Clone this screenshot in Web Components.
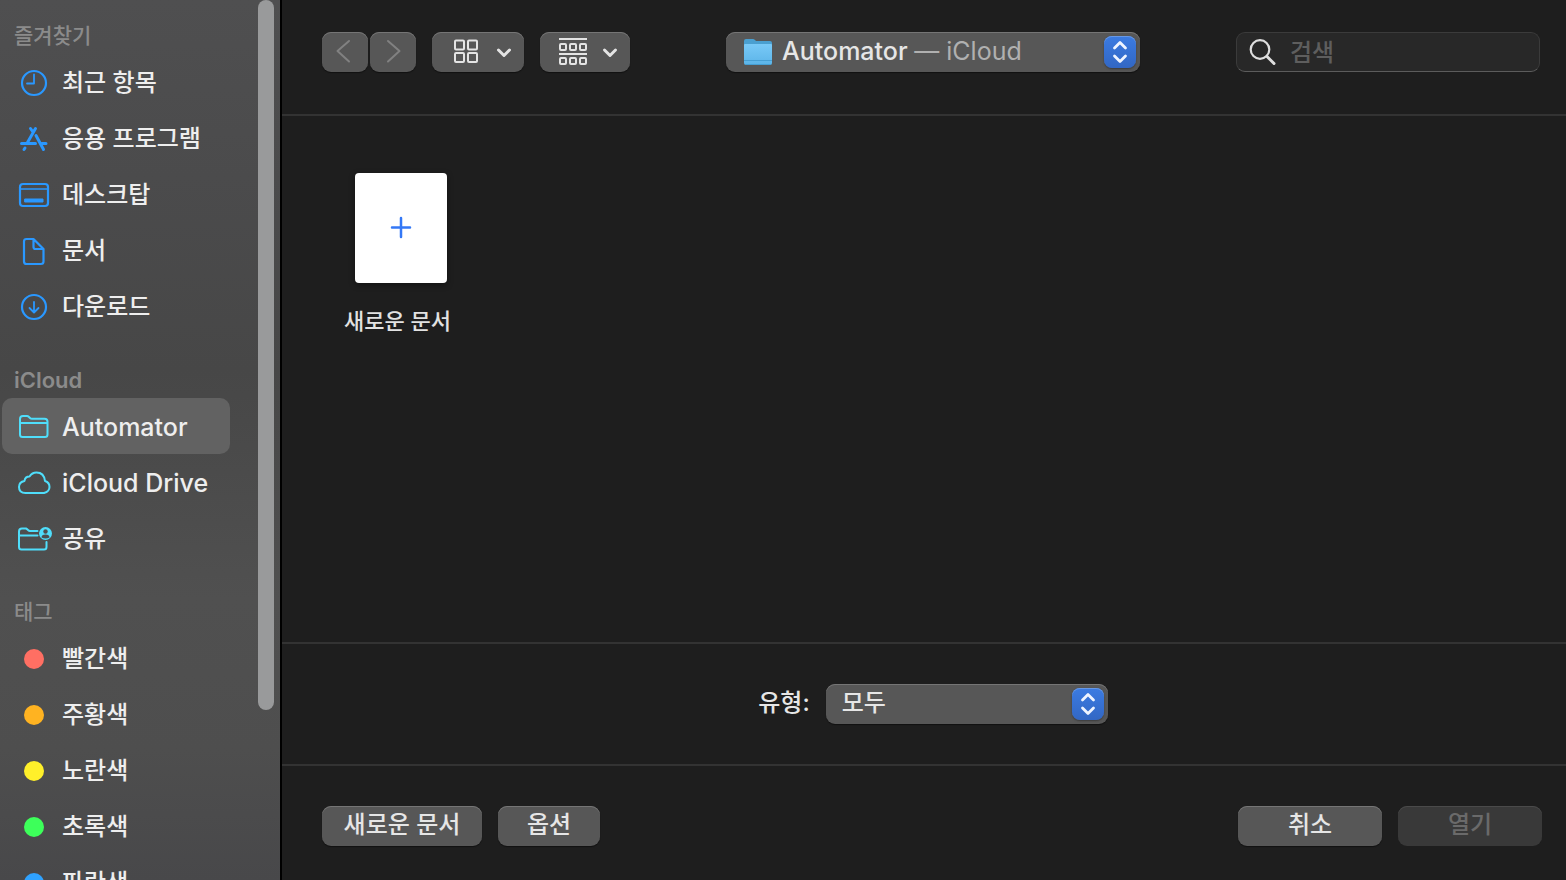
<!DOCTYPE html>
<html lang="ko">
<head>
<meta charset="utf-8">
<title>Automator</title>
<style>
    html, body {
        height: 100%;
        margin: 0;
        background: #1e1e1e;
    }
    body {
        font-family: Inter, "Noto Sans CJK KR", sans-serif;
        font-size: 24px;
        font-weight: 500;
        line-height: 36px;
        color: #e6e6e6;
    }
</style>
</head>
<body>
<open-dialog></open-dialog>

<script>
const attach = (el, html) => {
    const template = document.createElement('template');
    template.innerHTML = html;
    const shadow = el.attachShadow({ mode: 'open' });
    shadow.appendChild(template.content.cloneNode(true));
    return shadow;
};

// Sidebar group: a small heading and its rows
class SideSection extends HTMLElement {
    constructor() {
        super();
        attach(this, `
            <style>
                :host { display: block; }
                h2 {
                    display: flex;
                    align-items: flex-end;
                    height: 64px;
                    margin: 0;
                    padding-left: 12px;
                    font-size: 21px;
                    font-weight: 500;
                    color: #8b8b8b;
                }
                :host(:first-child) h2 { height: 54px; }
                :host([latin]) h2 { font-size: 22px; font-weight: 600; }
            </style>
            <h2><slot name="title"></slot></h2>
            <slot></slot>
        `);
    }
}
customElements.define('side-section', SideSection);

// Sidebar row: icon and name
class SideItem extends HTMLElement {
    constructor() {
        super();
        attach(this, `
            <style>
                :host { display: block; }
                a {
                    display: flex;
                    align-items: center;
                    gap: 10px;
                    height: 56px;
                    padding-left: 14px;
                    box-sizing: border-box;
                    border-radius: 10px;
                    color: #eee;
                    text-decoration: none;
                    white-space: nowrap;
                }
                span { padding-top: 2px; }
                :host([latin]) a { font-size: 25px; }
                :host([selected]) a { background: #626262; }
                ::slotted(svg) {
                    flex: none;
                    width: 36px;
                    height: 36px;
                    fill: none;
                    stroke: currentColor;
                    stroke-width: 2.2;
                    stroke-linecap: round;
                    stroke-linejoin: round;
                }
            </style>
            <a href="#"><slot name="icon"></slot><span><slot></slot></span></a>
        `);
    }
}
customElements.define('side-item', SideItem);

// Coloured tag row
class TagItem extends HTMLElement {
    constructor() {
        super();
        const shadow = attach(this, `
            <style>
                :host { display: block; }
                side-item svg { color: var(--tag); }
            </style>
            <side-item>
                <svg slot="icon" viewBox="0 0 36 36"><circle cx="18" cy="19" r="10" fill="currentColor" stroke="none"/></svg><slot></slot>
            </side-item>
        `);
        shadow.querySelector('svg').style.setProperty('--tag', this.getAttribute('color'));
    }
}
customElements.define('tag-item', TagItem);

// Push button
class PushButton extends HTMLElement {
    constructor() {
        super();
        const shadow = attach(this, `
            <style>
                :host { display: block; }
                button {
                    display: flex;
                    align-items: center;
                    justify-content: center;
                    width: 100%;
                    height: 40px;
                    padding: 0 0 2px;
                    border: 0;
                    border-radius: 9px;
                    background: #575757;
                    box-shadow: inset 0 1px #757575, 0 1px 1px #111;
                    color: #e6e6e6;
                    font: inherit;
                    white-space: nowrap;
                }
                :host([icon]) button { padding: 0; }
                :host([dim]) button {
                    background: #393939;
                    box-shadow: inset 0 1px #4a4a4a;
                    color: #6a6a6a;
                }
            </style>
            <button type="button"><slot></slot></button>
        `);
        const button = shadow.querySelector('button');
        button.disabled = this.hasAttribute('disabled');
        if (this.title) button.setAttribute('aria-label', this.title);
    }
}
customElements.define('push-button', PushButton);

// Blue up/down arrows at the end of a pop-up control
class PopupArrows extends HTMLElement {
    constructor() {
        super();
        attach(this, `
            <style>
                :host {
                    display: block;
                    width: 32px;
                    height: 32px;
                    border-radius: 8px;
                    background: linear-gradient(#3b7be2, #3267c4);
                    box-shadow: inset 0 1px #6798e6, 0 1px 2px #3a3a3a;
                    pointer-events: none;
                }
                svg { display: block; }
            </style>
            <svg width="32" height="32" viewBox="0 0 32 32" fill="none" stroke="#eef4ff" stroke-width="2.8" stroke-linecap="round" stroke-linejoin="round">
                <path d="M10.500 12 16 6.500l5.500 5.500M10.500 20l5.500 5.500 5.500-5.500"/>
            </svg>
        `);
    }
}
customElements.define('popup-arrows', PopupArrows);

// Location pop-up in the toolbar
class LocationPopup extends HTMLElement {
    constructor() {
        super();
        attach(this, `
            <style>
                :host { display: block; }
                button {
                    display: flex;
                    align-items: center;
                    gap: 8px;
                    width: 100%;
                    height: 40px;
                    padding: 0 4px 0 16px;
                    border: 0;
                    border-radius: 9px;
                    background: #575757;
                    box-shadow: inset 0 1px #757575, 0 1px 1px #111;
                    color: #e6e6e6;
                    font: inherit;
                    font-size: 25px;
                    text-align: left;
                    white-space: nowrap;
                }
                .name { flex: 1; padding-bottom: 2px; }
                .place { color: #b0b0b0; font-weight: 400; }
            </style>
            <button type="button" aria-haspopup="listbox">
                <svg width="32" height="32" viewBox="0 0 32 32">
                    <defs>
                        <linearGradient id="front" x2="0" y2="1">
                            <stop offset="0" stop-color="#79c9f7"/>
                            <stop offset="1" stop-color="#5bb4e8"/>
                        </linearGradient>
                    </defs>
                    <path d="M2 5a2 2 0 0 1 2-2h7q1 0 2 1l1 1h14a2 2 0 0 1 2 2v5H2z" fill="#4a9fd0"/>
                    <path d="M2 9q0-1 1-1h26q1 0 1 1v18a2 2 0 0 1-2 2H4a2 2 0 0 1-2-2z" fill="url(#front)"/>
                    <path d="M2 24.500h28M3 28.500h26" stroke="#469fd3"/>
                </svg>
                <span class="name">Automator <span class="place">— iCloud</span></span>
                <popup-arrows></popup-arrows>
            </button>
        `);
    }
}
customElements.define('location-popup', LocationPopup);

// Search field
class SearchField extends HTMLElement {
    constructor() {
        super();
        attach(this, `
            <style>
                :host { display: block; }
                label {
                    display: flex;
                    align-items: center;
                    gap: 13px;
                    height: 40px;
                    padding: 0 12px;
                    box-sizing: border-box;
                    border: 1px solid #3b3b3b;
                    border-bottom-color: #5c5c5c;
                    border-radius: 9px;
                    background: #282828;
                }
                svg { flex: none; }
                input {
                    flex: 1;
                    min-width: 0;
                    height: 38px;
                    padding: 0;
                    border: 0;
                    outline: 0;
                    background: none;
                    color: #e6e6e6;
                    font: inherit;
                }
                input::placeholder { color: #5e5e5e; opacity: 1; }
            </style>
            <label>
                <svg width="28" height="28" viewBox="0 0 28 28" fill="none" stroke="#dedede" stroke-linecap="round">
                    <circle cx="11" cy="11.500" r="9.300" stroke-width="2.200"/>
                    <path d="M18 18.500l7 7" stroke-width="3"/>
                </svg>
                <input type="search" placeholder="검색" aria-label="검색">
            </label>
        `);
    }
}
customElements.define('search-field', SearchField);

// File type label and select
class TypePicker extends HTMLElement {
    constructor() {
        super();
        attach(this, `
            <style>
                :host {
                    display: flex;
                    align-items: center;
                    justify-content: center;
                    gap: 16px;
                }
                label { padding-bottom: 2px; }
                .popup {
                    display: grid;
                    align-items: center;
                    width: 282px;
                }
                select, popup-arrows { grid-area: 1 / 1; }
                select {
                    appearance: none;
                    width: 100%;
                    height: 40px;
                    padding: 0 40px 2px 16px;
                    border: 0;
                    border-radius: 9px;
                    background: #575757;
                    box-shadow: inset 0 1px #757575, 0 1px 1px #111;
                    color: #e6e6e6;
                    font: inherit;
                }
                popup-arrows { justify-self: end; margin-right: 4px; }
            </style>
            <label for="type">유형:</label>
            <div class="popup">
                <select id="type"><option>모두</option></select>
                <popup-arrows></popup-arrows>
            </div>
        `);
    }
}
customElements.define('type-picker', TypePicker);

// Thumbnail with a name under it
class FileTile extends HTMLElement {
    constructor() {
        super();
        attach(this, `
            <style>
                :host { display: block; }
                button {
                    display: flex;
                    flex-direction: column;
                    align-items: center;
                    gap: 20px;
                    min-width: 114px;
                    padding: 0;
                    border: 0;
                    background: none;
                    color: #e2e2e2;
                    font: inherit;
                    font-size: 22px;
                }
                .page {
                    display: grid;
                    place-items: center;
                    width: 92px;
                    height: 110px;
                    border-radius: 4px;
                    background: #fff;
                    box-shadow: 0 2px 6px #0006;
                }
                .name { align-self: flex-start; }
            </style>
            <button type="button">
                <span class="page">
                    <svg width="24" height="24" viewBox="0 0 24 24" stroke="#3478f6" stroke-width="2.500" stroke-linecap="round"><path d="M12 2v19M3 11.500h18"/></svg>
                </span>
                <span class="name"><slot></slot></span>
            </button>
        `);
    }
}
customElements.define('file-tile', FileTile);

class OpenDialog extends HTMLElement {
    constructor() {
        super();
        attach(this, `
            <style>
                :host {
                    display: flex;
                    height: 100vh;
                    overflow: hidden;
                }
                aside {
                    display: flex;
                    flex: none;
                    width: 280px;
                    border-right: 2px solid #000;
                    background: linear-gradient(#4f4f50, #4b4b4c 20%, #474747 42%, #505050 68%, #4e4e4e 85%, #48484a);
                }
                nav {
                    flex: 1;
                    min-width: 0;
                    padding: 0 28px 0 2px;
                    overflow: hidden;
                }
                .thumb {
                    width: 16px;
                    height: calc(100% - 170px);
                    margin-right: 6px;
                    border-radius: 8px;
                    background: #999a9b;
                }
                side-item svg { color: #2a98ff; }
                .cloud side-item svg { color: #4fdefb; }
                main {
                    display: flex;
                    flex: 1;
                    flex-direction: column;
                    min-width: 0;
                }
                header, footer {
                    display: flex;
                    justify-content: space-between;
                }
                header {
                    padding: 32px 26px 42px 40px;
                    border-bottom: 2px solid #333;
                }
                footer { padding: 40px 24px 34px 40px; }
                .group { display: flex; gap: 16px; }
                .pair { display: flex; gap: 2px; }
                .pair push-button { width: 46px; }
                .view { width: 92px; }
                .sort { width: 90px; }
                location-popup { width: 414px; }
                search-field { width: 304px; }
                .files {
                    display: flex;
                    flex: 1;
                    align-items: flex-start;
                    padding: 57px 62px;
                }
                type-picker {
                    padding: 40px 0 40px 18px;
                    border: solid #333;
                    border-width: 2px 0;
                }
                .wide { width: 160px; }
                .short { width: 102px; }
                .answer { width: 144px; }
            </style>
            <aside>
                <nav aria-label="사이드바">
                    <side-section>
                        <span slot="title">즐겨찾기</span>
                        <side-item><svg slot="icon" viewBox="0 0 36 36"><circle cx="18" cy="19" r="12"/><path d="M18 10.500V19.500h-7" stroke-width="1.800"/></svg>최근 항목</side-item>
                        <side-item><svg slot="icon" viewBox="0 0 36 36"><path d="M19.500 8.500 11.500 22.500M14.500 8.500l2.500 3.500M20 15.500 27.500 29.500M5.500 23.500h14M26 23.500h4M9 28l-1 1.500" style="stroke-width:3"/></svg>응용 프로그램</side-item>
                        <side-item><svg slot="icon" viewBox="0 0 36 36"><rect x="4" y="8" width="28" height="22" rx="3"/><path d="M4 13h28" stroke-width="1.500"/><rect x="9" y="23" width="18" height="3" fill="currentColor" style="stroke-width:1"/></svg>데스크탑</side-item>
                        <side-item><svg slot="icon" viewBox="0 0 36 36"><path d="M10.500 7H17.500L27.500 17V29.500q0 2.500-2.500 2.500h-14.500Q8 32 8 29.500V9.500q0-2.500 2.500-2.500zM17.500 7v8q0 2 2 2h8"/></svg>문서</side-item>
                        <side-item><svg slot="icon" viewBox="0 0 36 36"><circle cx="18" cy="19" r="12"/><path d="M18 14v10M13.500 20l4.500 4.500 4.500-4.500" style="stroke-width:1.800"/></svg>다운로드</side-item>
                    </side-section>
                    <side-section class="cloud" latin>
                        <span slot="title">iCloud</span>
                        <side-item latin selected><svg slot="icon" viewBox="0 0 36 36"><path d="M4 26.500V11Q4 8 7 8h4q1 0 2 1l1 1q.8.8 2 .8h12.500q3 0 3 3V26.500q0 2.500-2.500 2.500h-22.500Q4 29 4 26.500zM4 15h27.500" style="stroke-width:2"/></svg>Automator</side-item>
                        <side-item latin><svg slot="icon" viewBox="0 0 36 36"><path d="M9.500 29Q3 29 3 23q0-5 5.500-6 .5-4.500 5-4.500Q16 8.500 20.500 8.500q7.500 0 8.500 8.500 4.500 1.500 4.500 6t-5.500 6z" style="stroke-width:2"/></svg>iCloud Drive</side-item>
                        <side-item><svg slot="icon" viewBox="0 0 36 36"><path d="M21.500 11H14q-1 0-2-1t-2-1.500H6q-3 0-3 3V27q0 2.500 2.500 2.500H28q2.500 0 2.500-2.500v-5M3 15.500h18.500" style="stroke-width:2"/><circle cx="29.500" cy="13.500" r="6.500" fill="currentColor" stroke="none"/><circle cx="29.500" cy="11.500" r="2.200" fill="#4e4e4e" stroke="none"/><path d="M25.500 17.500q0-3 4-3t4 3q-4 2-8 0z" fill="#4e4e4e" stroke="none"/></svg>공유</side-item>
                    </side-section>
                    <side-section>
                        <span slot="title">태그</span>
                        <tag-item color="#ff6f63">빨간색</tag-item>
                        <tag-item color="#ffb321">주황색</tag-item>
                        <tag-item color="#fff02a">노란색</tag-item>
                        <tag-item color="#3dff5a">초록색</tag-item>
                        <tag-item color="#2fa2ff">파란색</tag-item>
                    </side-section>
                </nav>
                <div class="thumb"></div>
            </aside>
            <main>
                <header>
                    <div class="group">
                        <div class="pair">
                            <push-button icon disabled title="뒤로"><svg width="46" height="40" viewBox="0 0 46 40" fill="none" stroke="#818181" stroke-width="2" stroke-linecap="round" stroke-linejoin="round"><path d="M27 9 15.500 19 27 29.500"/></svg></push-button>
                            <push-button icon disabled title="앞으로"><svg width="46" height="40" viewBox="0 0 46 40" fill="none" stroke="#818181" stroke-width="2" stroke-linecap="round" stroke-linejoin="round"><path d="M18 9 29.500 19 18 29.500"/></svg></push-button>
                        </div>
                        <push-button class="view" icon title="아이콘 보기">
                            <svg width="92" height="40" viewBox="0 0 92 40" fill="none" stroke="#e4e4e4" stroke-width="2" stroke-linecap="round" stroke-linejoin="round">
                                <rect x="23" y="8.500" width="9" height="9" rx="1"/><rect x="36" y="8.500" width="9" height="9" rx="1"/>
                                <rect x="23" y="21" width="9" height="9" rx="1"/><rect x="36" y="21" width="9" height="9" rx="1"/>
                                <path d="M66.500 18l5.500 5.500 5.500-5.500" stroke-width="3"/>
                            </svg>
                        </push-button>
                        <push-button class="sort" icon title="그룹">
                            <svg width="90" height="40" viewBox="0 0 90 40" fill="none" stroke="#e4e4e4" stroke-width="2" stroke-linejoin="round">
                                <path d="M19 7h28M19 22h28"/>
                                <rect x="20" y="12" width="6" height="6" rx="1"/><rect x="30" y="12" width="6" height="6" rx="1"/><rect x="40" y="12" width="6" height="6" rx="1"/>
                                <rect x="20" y="26" width="6" height="6" rx="1"/><rect x="30" y="26" width="6" height="6" rx="1"/><rect x="40" y="26" width="6" height="6" rx="1"/>
                                <path d="M64.500 18l5.500 5.500 5.500-5.500" stroke-width="3" stroke-linecap="round"/>
                            </svg>
                        </push-button>
                    </div>
                    <location-popup></location-popup>
                    <search-field></search-field>
                </header>
                <div class="files">
                    <file-tile>새로운 문서</file-tile>
                </div>
                <type-picker></type-picker>
                <footer>
                    <div class="group">
                        <push-button class="wide">새로운 문서</push-button>
                        <push-button class="short">옵션</push-button>
                    </div>
                    <div class="group">
                        <push-button class="answer">취소</push-button>
                        <push-button class="answer" disabled dim>열기</push-button>
                    </div>
                </footer>
            </main>
        `);
    }
}
customElements.define('open-dialog', OpenDialog);
</script>
</body>
</html>
